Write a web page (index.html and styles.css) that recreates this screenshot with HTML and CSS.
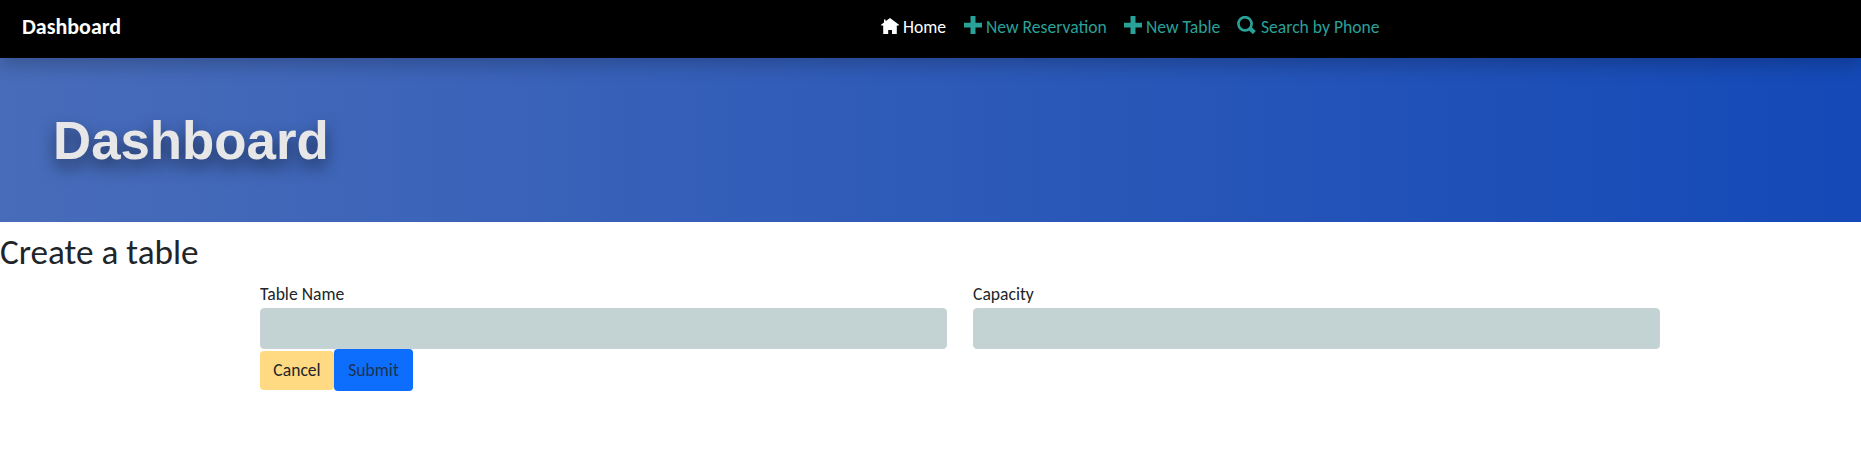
FILE: index.html
```html
<!DOCTYPE html>
<html lang="en">
<head>
<meta charset="utf-8">
<title>Dashboard</title>
<link rel="stylesheet" href="styles.css">
</head>
<body>
<nav class="navbar">
  <a class="brand">Dashboard</a>
  <div class="links">
    <a class="link home"><svg class="icon" viewBox="0 0 18 18"><path d="M9 0 18 6.8V7.4H15.8V16H11V12H7.2V16H2.2V7.4H0V6.8L3 4.5V1.6H4.6V3.3Z"/></svg><span>Home</span></a>
    <a class="link reservation"><svg class="icon plus" viewBox="0 0 18 18"><path d="M6.5 0h5v6.8H18v4.7h-6.5V18h-5v-6.5H0V6.8h6.5Z"/></svg><span>New Reservation</span></a>
    <a class="link table"><svg class="icon plus" viewBox="0 0 18 18"><path d="M6.5 0h5v6.8H18v4.7h-6.5V18h-5v-6.5H0V6.8h6.5Z"/></svg><span>New Table</span></a>
    <a class="link search"><svg class="icon glass" viewBox="0 0 19 18"><circle cx="8" cy="7.8" r="6.6"/><path d="m12.8 12.4 4.6 4.2"/></svg><span>Search by Phone</span></a>
  </div>
</nav>
<header class="hero"><h1>Dashboard</h1></header>
<main>
  <h2>Create a table</h2>
  <form class="form">
    <div class="fields">
      <label><span>Table Name</span><input type="text"></label>
      <label><span>Capacity</span><input type="text"></label>
    </div>
    <div class="actions">
      <button type="button" class="cancel">Cancel</button><button type="button" class="submit">Submit</button>
    </div>
  </form>
</main>
</body>
</html>
```
FILE: styles.css
```css
* { box-sizing: border-box; }
body { margin: 0; background: #fff; color: #212529; font-family: Carlito, Lato, sans-serif; font-size: 17.6px; line-height: 24px; }
.navbar { position: relative; display: flex; height: 58px; background: #000; box-shadow: 0 8px 16px rgba(0, 0, 0, .2); }
.brand { width: 859px; padding: 15px 0 0 22px; color: #fff; font-size: 22px; font-weight: 700; }
.links { display: flex; padding: 15px 0 0 22px; }
.link { display: flex; gap: 4px; height: 24px; white-space: nowrap; color: #2aa198; }
.home { width: 83px; color: #fff; }
.reservation { width: 160px; }
.table { width: 113px; }
.search { gap: 5px; }
.icon { width: 18px; height: 18px; margin-top: 3px; fill: currentColor; flex: none; }
.plus { margin-top: 1px; }
.glass { width: 19px; margin-top: 1px; fill: none; stroke: currentColor; stroke-width: 2.7; }
.glass path { stroke-width: 4.2; }
.hero { height: 164px; padding: 53px 53px; background: linear-gradient(to right, #486cb9, #1449b7); }
h1 { margin: 0; color: #e7e7e7; font: 700 52.8px/60px "Liberation Sans", Arial, sans-serif; text-shadow: 0 8px 16px rgba(0, 0, 0, .5); }
h2 { margin: 0; padding-top: 11px; height: 60px; font-size: 35.2px; line-height: 38px; font-weight: 400; }
.form { width: 1400px; margin-left: 260px; }
.fields { display: grid; grid-template-columns: 1fr 1fr; gap: 26px; }
label { display: flex; flex-direction: column; gap: 2px; }
label span { height: 24px; }
input { width: 100%; height: 41px; border: 1px solid #c9d2d8; border-radius: 4px; background: #c3d2d2; }
.actions { display: flex; align-items: center; height: 42px; }
button { border: 0; border-radius: 4px; padding: 0; color: #212529; font: inherit; }
.cancel { width: 74px; height: 39px; margin-top: 1px; padding-bottom: 1px; background: #ffda82; }
.submit { width: 79px; height: 42px; background: #0d6efd; color: #1c3350; }
```
